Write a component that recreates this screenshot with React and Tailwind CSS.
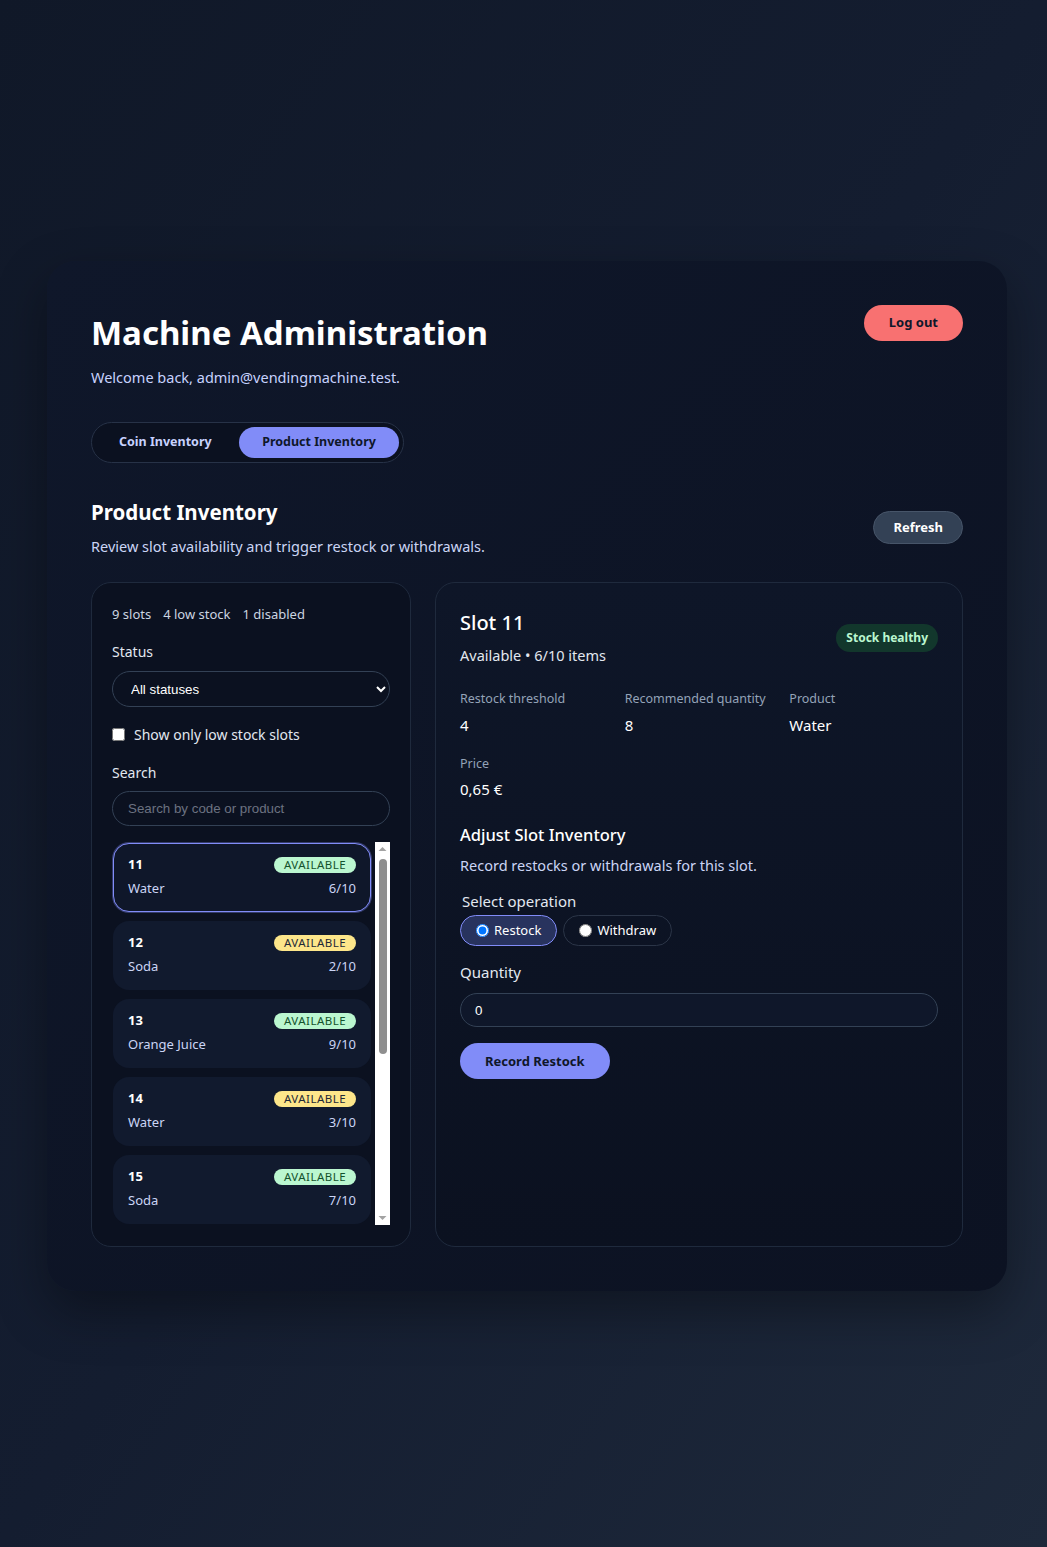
import React, { useState } from 'react'

const slots = [
  { code: 11, name: 'Water', qty: 6, cap: 10, low: false },
  { code: 12, name: 'Soda', qty: 2, cap: 10, low: true },
  { code: 13, name: 'Orange Juice', qty: 9, cap: 10, low: false },
  { code: 14, name: 'Water', qty: 3, cap: 10, low: true },
  { code: 15, name: 'Soda', qty: 7, cap: 10, low: false },
  { code: 21, name: 'Chips', qty: 1, cap: 10, low: true },
  { code: 22, name: 'Candy Bar', qty: 8, cap: 10, low: false },
  { code: 23, name: 'Cookies', qty: 2, cap: 10, low: true },
  { code: 24, name: 'Gum', qty: 0, cap: 10, low: false },
]

const font = { fontFamily: '"Noto Sans", "Open Sans", sans-serif' }
const formFont = { fontFamily: '"Liberation Sans", Arial, sans-serif' }

function SlotItem({ slot, selected, onClick }) {
  return (
    <button
      type="button"
      onClick={onClick}
      className={`w-full shrink-0 rounded-2xl px-[14px] pt-[13px] pb-[14px] text-left ${
        selected
          ? 'border border-[#818cf8] bg-[#0f172a] shadow-[0_0_0_1px_rgba(129,140,248,0.35)]'
          : 'border border-transparent bg-[#111a2e]'
      }`}
    >
      <div className="flex h-4 items-center justify-between">
        <span className="text-[13px] font-bold text-white">{slot.code}</span>
        <span
          className={`rounded-full px-[10px] text-[11.5px] leading-4 tracking-[0.04em] ${
            slot.low ? 'bg-[#fde68a] text-[#1f2937]' : 'bg-[#bbf7d0] text-[#14532d]'
          }`}
        >
          AVAILABLE
        </span>
      </div>
      <div className="mt-[6px] flex items-center justify-between text-[13px] leading-[18px] text-[#cbd5f5]">
        <span>{slot.name}</span>
        <span>
          {slot.qty}/{slot.cap}
        </span>
      </div>
    </button>
  )
}

// barra de desplazamiento clásica dibujada a mano
function ScrollBar() {
  return (
    <div className="flex w-[15px] shrink-0 flex-col items-center bg-white">
      <svg width="15" height="15" viewBox="0 0 15 15" className="shrink-0">
        <path d="M3.5 9 L7.5 5 L11.5 9 Z" fill="#a3a3a3" />
      </svg>
      <div className="mt-[2px] h-[195px] w-[8px] rounded-full bg-[#8f8f8f]" />
      <div className="flex-1" />
      <svg width="15" height="15" viewBox="0 0 15 15" className="shrink-0">
        <path d="M3.5 6 L7.5 10 L11.5 6 Z" fill="#a3a3a3" />
      </svg>
    </div>
  )
}

export default function App() {
  const [tab, setTab] = useState('product')
  const [selected, setSelected] = useState(11)
  const [op, setOp] = useState('restock')
  const [qty, setQty] = useState('0')

  return (
    <div
      style={font}
      className="flex min-h-screen items-start justify-center bg-gradient-to-br from-[#101828] via-[#141d30] to-[#1e293b] pt-[261px] pb-[256px] pl-[7px]"
    >
      <div className="w-[960px] rounded-[28px] bg-gradient-to-br from-[#0f172a] to-[#0c1222] px-[44px] pt-[44px] pb-[44px] shadow-[0_20px_50px_rgba(0,0,0,0.35)]">
        <div className="flex items-start justify-between">
          <div>
            <h1 className="mt-[6px] text-[33px] font-bold leading-[44px] text-white">Machine Administration</h1>
            <p className="mt-[12px] text-[14.5px] text-[#c7d2fe]">Welcome back, admin@vendingmachine.test.</p>
          </div>
          <button className="h-9 rounded-full bg-[#f87171] px-[25px] text-[13px] font-bold text-[#0f172a]">
            Log out
          </button>
        </div>

        <div className="mt-[33px] inline-flex items-center gap-[4px] rounded-full border border-[#273247] bg-[#0b1120] p-[4px]">
          <button
            onClick={() => setTab('coin')}
            className={`h-[31px] rounded-full px-[23px] text-[12.5px] font-bold ${
              tab === 'coin' ? 'bg-[#818cf8] text-[#0f172a]' : 'text-[#c7d2fe]'
            }`}
          >
            Coin Inventory
          </button>
          <button
            onClick={() => setTab('product')}
            className={`h-[31px] rounded-full px-[23.5px] text-[12.5px] font-bold ${
              tab === 'product' ? 'bg-[#818cf8] text-[#0f172a]' : 'text-[#c7d2fe]'
            }`}
          >
            Product Inventory
          </button>
        </div>

        <div className="mt-[35px] flex items-center justify-between">
          <div>
            <h2 className="text-[20.5px] font-bold leading-7 text-white">Product Inventory</h2>
            <p className="mt-[10px] text-[14.5px] text-[#cbd5f5]">Review slot availability and trigger restock or withdrawals.</p>
          </div>
          <button className="h-[33px] rounded-full border border-[#475569] bg-[#334155] px-[19px] text-[13px] font-bold text-white">
            Refresh
          </button>
        </div>

        <div className="mt-[24px] grid grid-cols-[320px_1fr] gap-6">
          {/* Filtros y lista */}
          <div className="rounded-[20px] border border-[#1f2a3d] bg-[#0b1120] px-[20px] pt-[22px] pb-[21px]">
            <div className="flex gap-3 text-[13px] text-[#cbd5e1]">
              <span>9 slots</span>
              <span>4 low stock</span>
              <span>1 disabled</span>
            </div>

            <label className="mt-[17px] block text-[14px] text-[#e2e8f0]">Status</label>
            <select
              style={formFont}
              className="mt-[9px] h-9 w-full rounded-full border border-[#334155] bg-[#0b1120] pl-[14px] pr-2 text-[13.33px] text-white"
            >
              <option>All statuses</option>
              <option>Available</option>
              <option>Disabled</option>
            </select>

            <label className="mt-[17px] flex items-center gap-[9px] text-[14px] text-[#e2e8f0]">
              <input type="checkbox" className="m-0 h-[13px] w-[13px]" />
              Show only low stock slots
            </label>

            <label className="mt-[17px] block text-[14px] text-[#e2e8f0]">Search</label>
            <input
              placeholder="Search by code or product"
              style={formFont}
              className="mt-[8px] h-[35px] w-full rounded-full border border-[#334155] bg-[#0b1120] px-[15px] text-[13.33px] text-white placeholder:text-[#6b7280]"
            />

            <div className="mt-[16px] flex h-[383px]">
              <div className="flex flex-1 flex-col gap-[9px] overflow-y-auto p-[1px] pr-[4px] [scrollbar-width:none]">
                {slots.map((s) => (
                  <SlotItem key={s.code} slot={s} selected={selected === s.code} onClick={() => setSelected(s.code)} />
                ))}
              </div>
              <ScrollBar />
            </div>
          </div>

          {/* Detalle del slot */}
          <div className="rounded-[20px] border border-[#1f2a3d] bg-gradient-to-b from-[#0e1628] to-[#0b1120] px-[24px] pt-[26px] pb-[24px]">
            <div className="flex items-start justify-between">
              <div>
                <h3 className="text-[20px] font-medium leading-7 text-white">Slot 11</h3>
                <p className="mt-[8px] text-[14.5px] text-[#e2e8f0]">Available • 6/10 items</p>
              </div>
              <span className="mt-[15px] rounded-full bg-[#12372c] px-[10px] py-[5px] text-[12px] font-bold text-[#bbf7d0]">
                Stock healthy
              </span>
            </div>

            <div className="mt-[24px] grid grid-cols-3 gap-x-4 gap-y-[18px]">
              {[
                ['Restock threshold', '4'],
                ['Recommended quantity', '8'],
                ['Product', 'Water'],
                ['Price', '0,65 €'],
              ].map(([label, value]) => (
                <div key={label}>
                  <div className="text-[12.5px] text-[#94a3b8]">{label}</div>
                  <div className="mt-[5px] text-[15px] text-white">{value}</div>
                </div>
              ))}
            </div>

            <h4 className="mt-[22px] text-[16.5px] font-medium text-white">Adjust Slot Inventory</h4>
            <p className="mt-[7px] text-[14.5px] text-[#cbd5f5]">Record restocks or withdrawals for this slot.</p>

            <fieldset className="mt-[14px]">
              <legend className="px-[2px] text-[15px] text-[#e2e8f0]">Select operation</legend>
              <div className="mt-[2px] flex gap-[6px]">
                {[
                  ['restock', 'Restock'],
                  ['withdraw', 'Withdraw'],
                ].map(([key, label]) => (
                  <label
                    key={key}
                    className={`flex h-[31px] items-center gap-[5px] rounded-full border px-[15px] text-[13px] text-white ${
                      op === key ? 'border-[#818cf8] bg-[#28335e]' : 'border-[#2b3547] bg-transparent'
                    }`}
                  >
                    <input
                      type="radio"
                      name="op"
                      checked={op === key}
                      onChange={() => setOp(key)}
                      className="m-0 h-[13px] w-[13px]"
                    />
                    {label}
                  </label>
                ))}
              </div>
            </fieldset>

            <label className="mt-[15px] block text-[15px] text-[#e2e8f0]">Quantity</label>
            <input
              type="number"
              value={qty}
              onChange={(e) => setQty(e.target.value)}
              style={formFont}
              className="mt-[10px] h-[34px] w-full rounded-full border border-[#334155] bg-[#0f172a] px-[14px] text-[13.33px] text-white"
            />

            <button className="mt-[16px] h-9 rounded-full bg-[#818cf8] px-[25px] text-[13px] font-bold text-[#0f172a]">
              Record Restock
            </button>
          </div>
        </div>
      </div>
    </div>
  )
}
